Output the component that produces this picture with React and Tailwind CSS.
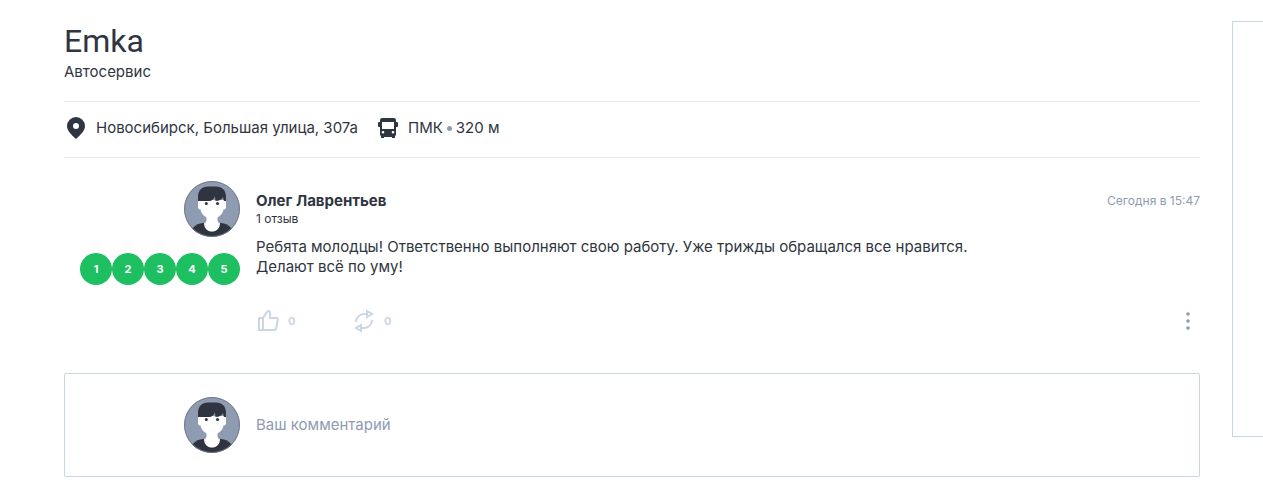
const marks = [1, 2, 3, 4, 5]

function Avatar() {
  return (
    <svg viewBox="0 0 56 56" className="size-14 shrink-0" aria-hidden="true">
      <defs>
        <clipPath id="avatar-circle">
          <circle cx="28" cy="28" r="28" />
        </clipPath>
      </defs>
      <g clipPath="url(#avatar-circle)">
        <circle cx="28" cy="28" r="28" fill="#8f9bb0" />
        <path d="M8 48c3-4 7-6 11-6h18c4 0 8 2 11 6v8H8z" fill="#2f343f" />
        <path d="M14 19h28v7q0 2.500-2.500 2.500C39 32 36.500 35 33.500 36.500V39q0 3 2.500 3.200c0 5-3.500 8.300-8 8.300s-8-3.300-8-8.300q2.500-.2 2.500-3.200v-2.500C19.500 35 17 32 16.500 28.500Q14 28.500 14 26z" fill="#fff" />
        <path d="M14 20v-4C14 9 18 5.500 24 5.500h8c6 0 10 3.500 10 10.500v4h-2q-.7-1.500-1-4-2 4-7.500 4-.5-2-.5-5-1.500 5-6 5z" fill="#2f343f" />
        <circle cx="22.300" cy="22.500" r="1.500" fill="#2f343f" />
        <circle cx="33.500" cy="22.500" r="1.500" fill="#2f343f" />
      </g>
      <circle cx="28" cy="28" r="27.500" fill="none" stroke="#6f7a8c" />
    </svg>
  )
}

function PinIcon() {
  return (
    <svg viewBox="0 0 24 24" className="size-6" fill="#2f3541" aria-hidden="true">
      <path fillRule="evenodd" d="M12 1a9 9 0 0 0-9 9c0 4.500 4 8.500 9 13 5-4.500 9-8.500 9-13a9 9 0 0 0-9-9zm0 6a3 3 0 1 1 0 6 3 3 0 0 1 0-6z" />
    </svg>
  )
}

function BusIcon() {
  return (
    <svg viewBox="0 0 24 24" className="size-6" fill="#2f3541" aria-hidden="true">
      <path fillRule="evenodd" d="M6 2h12q2 0 2 3v1h1q1 0 1 1v3q0 1-1 1h-1v8l-1 1v2h-3v-1H8v1H5v-2l-1-1v-8H3q-1 0-1-1V7q0-1 1-1h1V5q0-3 2-3zm0 4v7h12V6zm1 9a1.300 1.300 0 1 0 0 2.600A1.300 1.300 0 0 0 7 15zm10 0a1.300 1.300 0 1 0 0 2.600 1.300 1.300 0 0 0 0-2.600z" />
    </svg>
  )
}

function LikeIcon() {
  return (
    <svg viewBox="0 0 24 24" className="size-6" fill="none" stroke="#cbd5e4" strokeWidth="2" aria-hidden="true">
      <path d="M3 9h4v12H3zM7 9l4.500-6.500q1-1 2 0 .5.5.5 1.500v5h6.500q1.500 0 1.300 1.500l-1.600 9q-.3 1.500-2 1.500H7z" />
    </svg>
  )
}

function RepostIcon() {
  return (
    <svg viewBox="0 0 24 24" className="size-6" fill="none" stroke="#cbd5e4" strokeWidth="2" aria-hidden="true">
      <path d="M4 13a8 8 0 0 1 8-8h3M15 2v6l5-3zM20 11a8 8 0 0 1-8 8H9M9 16v6l-5-3z" />
    </svg>
  )
}

export default function App() {
  return (
    <div className="flex items-start overflow-hidden bg-white font-['Inter','Noto_Sans',sans-serif] text-[15px] leading-5 text-[#2f3541]">
      <main className="min-w-0 flex-1 pt-5 pr-8 pl-16">
        <header>
          <h1 className="font-['Roboto',sans-serif] text-[32px] leading-[42px]">Emka</h1>
          <p>Автосервис</p>
        </header>

        {/* Адрес и остановка */}
        <div className="mt-[19px] flex h-[57px] gap-[18px] border-y border-[#e4e9f0] pt-[14px]">
          <div className="flex items-start gap-2">
            <PinIcon />
            <span className="leading-6">Новосибирск, Большая улица, 307а</span>
          </div>
          <div className="flex items-start gap-2">
            <BusIcon />
            <span className="flex items-center gap-1 leading-6">
              ПМК
              <span className="size-[5px] rounded-full bg-[#8f9bb3]" />
              320 м
            </span>
          </div>
        </div>

        {/* Отзыв */}
        <article className="mt-[23px] flex gap-4 pl-4">
          <div className="flex w-40 shrink-0 flex-col items-end gap-4">
            <Avatar />
            <div className="flex">
              {marks.map((mark) => (
                <span key={mark} className="flex size-8 items-center justify-center rounded-full bg-[#1dbf60] text-[11px] font-bold text-white">
                  {mark}
                </span>
              ))}
            </div>
          </div>
          <div className="min-w-0 flex-1 pt-[10px]">
            <div className="flex justify-between">
              <h2 className="font-bold">Олег Лаврентьев</h2>
              <time className="text-xs leading-5 text-[#8f9bb3]">Сегодня в 15:47</time>
            </div>
            <p className="text-xs">1 отзыв</p>
            <p className="mt-[10px]">
              Ребята молодцы! Ответственно выполняют свою работу. Уже трижды обращался все нравится.
              <br />
              Делают всё по уму!
            </p>
            <div className="mt-8 flex items-center text-[11px] font-bold text-[#cbd5e4]">
              <button type="button" aria-label="Нравится" className="flex w-24 items-center gap-2">
                <LikeIcon />
                0
              </button>
              <button type="button" aria-label="Поделиться" className="flex items-center gap-2">
                <RepostIcon />
                0
              </button>
              <button type="button" aria-label="Ещё" className="ml-auto">
                <svg viewBox="0 0 24 24" className="size-6" fill="#8f9bb3" aria-hidden="true">
                  <circle cx="12" cy="5" r="1.800" />
                  <circle cx="12" cy="12" r="1.800" />
                  <circle cx="12" cy="19" r="1.800" />
                </svg>
              </button>
            </div>
          </div>
        </article>

        {/* Форма комментария */}
        <form className="mt-10 mb-4 flex items-center gap-4 rounded-xs border border-[#c9d5e5] py-[23px] pr-4 pl-[119px]">
          <Avatar />
          <input
            type="text"
            aria-label="Ваш комментарий"
            placeholder="Ваш комментарий"
            className="min-w-0 flex-1 outline-none placeholder:text-[#8f9bb3]"
          />
        </form>
      </main>

      <aside className="mt-[21px] h-[416px] w-[31px] shrink-0 border-y border-l border-[#c9d5e5]" />
    </div>
  )
}
